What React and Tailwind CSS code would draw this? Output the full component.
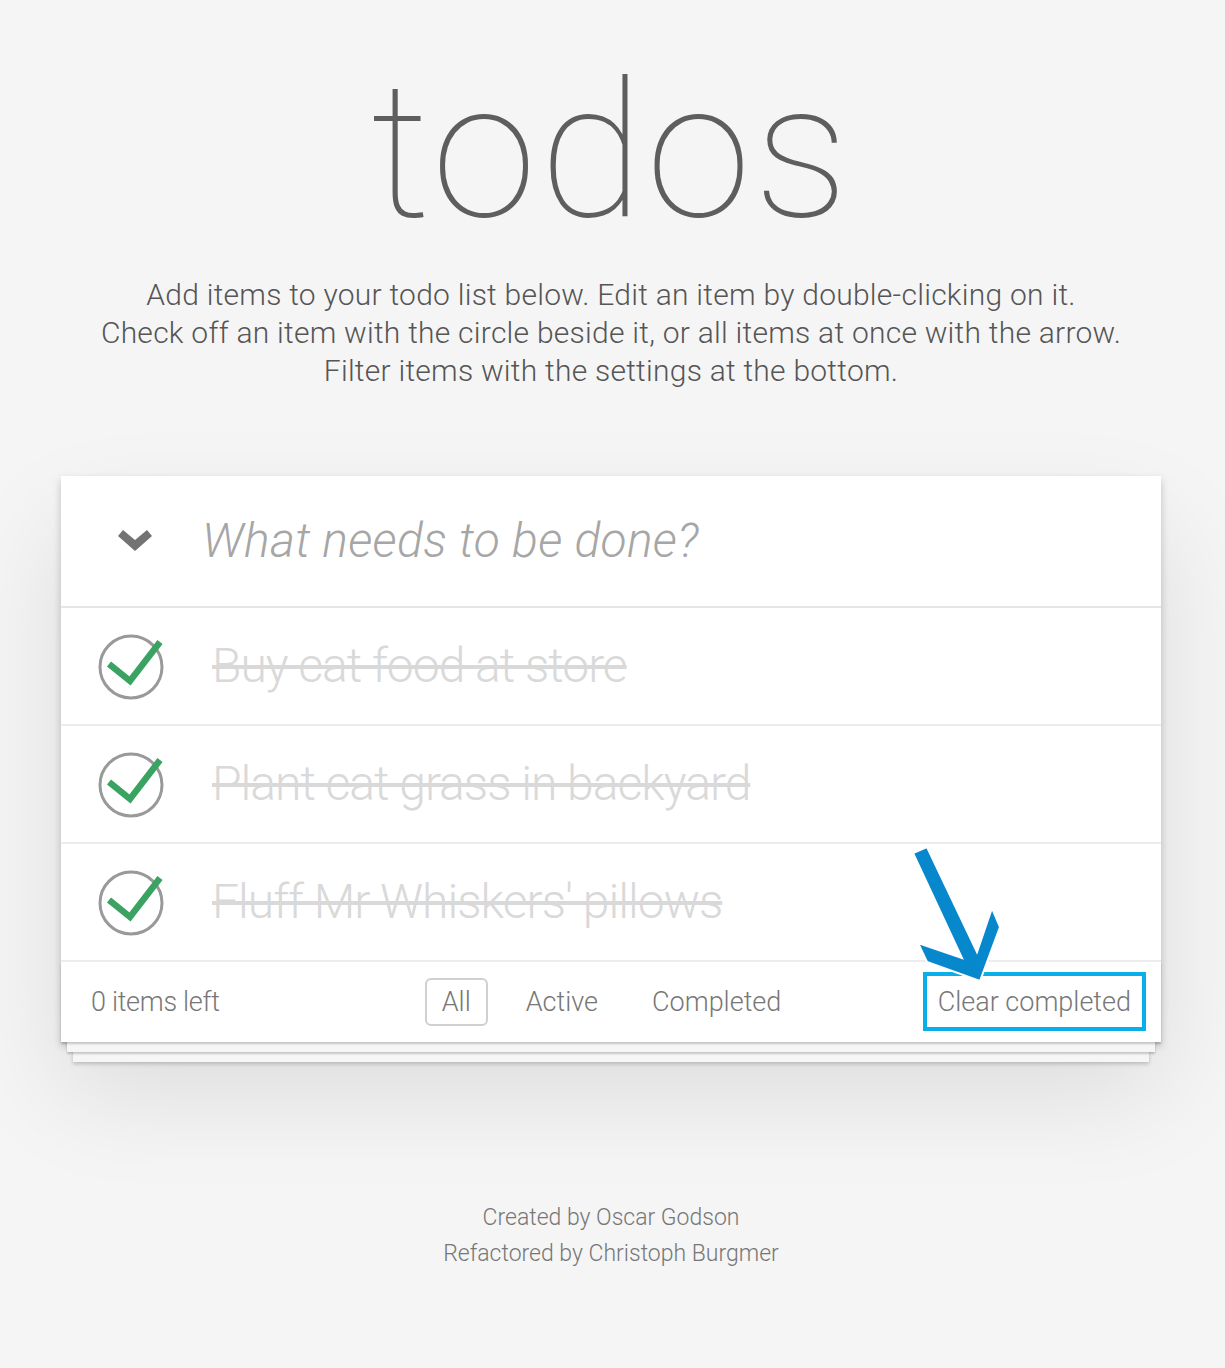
export default function App() {
  const items = ["Buy cat food at store", "Plant cat grass in backyard", "Fluff Mr Whiskers' pillows"];
  return (
    <div className="min-h-[1368px] bg-[#f5f5f5] font-['Roboto',sans-serif] font-light text-[#4d4d4d]">
      <div className="ml-[61px] w-[1100px] pt-[51px]">
        <h1 className="text-center text-[190px] leading-[200px] font-thin tracking-[3px] text-[#5e5e5e]">todos</h1>
        <p className="mt-[25px] text-center text-[30px] leading-[38px] tracking-[0.25px] text-[#555]">
          Add items to your todo list below. Edit an item by double-clicking on it.<br />
          Check off an item with the circle beside it, or all items at once with the arrow.<br />
          Filter items with the settings at the bottom.
        </p>
        <section className="relative mt-[86px] bg-white shadow-[0_4px_8px_0_rgba(0,0,0,0.2),0_50px_100px_0_rgba(0,0,0,0.1)]">
          <header className="flex h-[132px] items-center border-b-2 border-[#e6e6e6]">
            <div className="flex w-[141px] justify-center pl-[6px]">
              <svg width="34" height="22" viewBox="0 0 34 22">
                <polygon points="0,6 5,0 17,10 29,0 34,6 17,21" fill="#737373" />
              </svg>
            </div>
            <span className="text-[48px] italic font-light tracking-[0.3px] text-[#a6a6a6]">What needs to be done?</span>
          </header>
          <ul>
            {items.map((t) => (
              <li key={t} className="flex h-[118px] items-center border-b-2 border-[#ededed]">
                <div className="flex w-[151px] justify-start pl-[35px]">
                  <svg width="68" height="68" viewBox="0 0 68 68">
                    <circle cx="35" cy="35" r="31" fill="none" stroke="#999" strokeWidth="3" />
                    <polyline points="13,32 34,49 64,10" fill="none" stroke="#3aa362" strokeWidth="6.5" />
                  </svg>
                </div>
                <span className="text-[48px] font-light tracking-[-1px] text-[#d9d9d9] line-through decoration-[#d9d9d9] decoration-[4px]">{t}</span>
              </li>
            ))}
          </ul>
          <footer className="relative grid h-[80px] grid-cols-[1fr_auto_1fr] items-center px-[30px] text-[27px] text-[#777] shadow-[0_2px_2px_rgba(0,0,0,0.2),0_16px_0_-6px_#f6f6f6,0_18px_2px_-6px_rgba(0,0,0,0.2),0_32px_0_-12px_#f6f6f6,0_34px_4px_-12px_rgba(0,0,0,0.2)]">
            <span className="tracking-[-0.3px]">0 items left</span>
            <ul className="flex items-center gap-[22px]">
              <li className="rounded-[6px] border-2 border-[#d0d0d0] px-[15px] py-[4px] leading-[36px]">All</li>
              <li className="border-2 border-transparent px-[14px] py-[4px] leading-[36px]">Active</li>
              <li className="border-2 border-transparent px-[14px] py-[4px] leading-[36px]">Completed</li>
            </ul>
            <div className="flex justify-end">
              <span className="relative leading-[36px]">
                Clear completed
                <span className="absolute left-[-15px] right-[-15px] top-[-12px] bottom-[-11px] border-4 border-[#0aaee8]" />
              </span>
            </div>
          </footer>
          <svg className="pointer-events-none absolute left-0 top-0 overflow-visible" width="1100" height="566" viewBox="61 476 1100 566">
            <polygon
              points="913,853 927,847 977,952 992,908 1000,927 980,981 927,962 918,943 962,958"
              fill="#0788cc"
              stroke="#fff"
              strokeWidth="2"
            />
          </svg>
        </section>
        <div className="mt-[158px] text-center text-[23px] leading-[36px] text-[#777]">
          <p>Created by Oscar Godson</p>
          <p>Refactored by Christoph Burgmer</p>
        </div>
      </div>
    </div>
  );
}
